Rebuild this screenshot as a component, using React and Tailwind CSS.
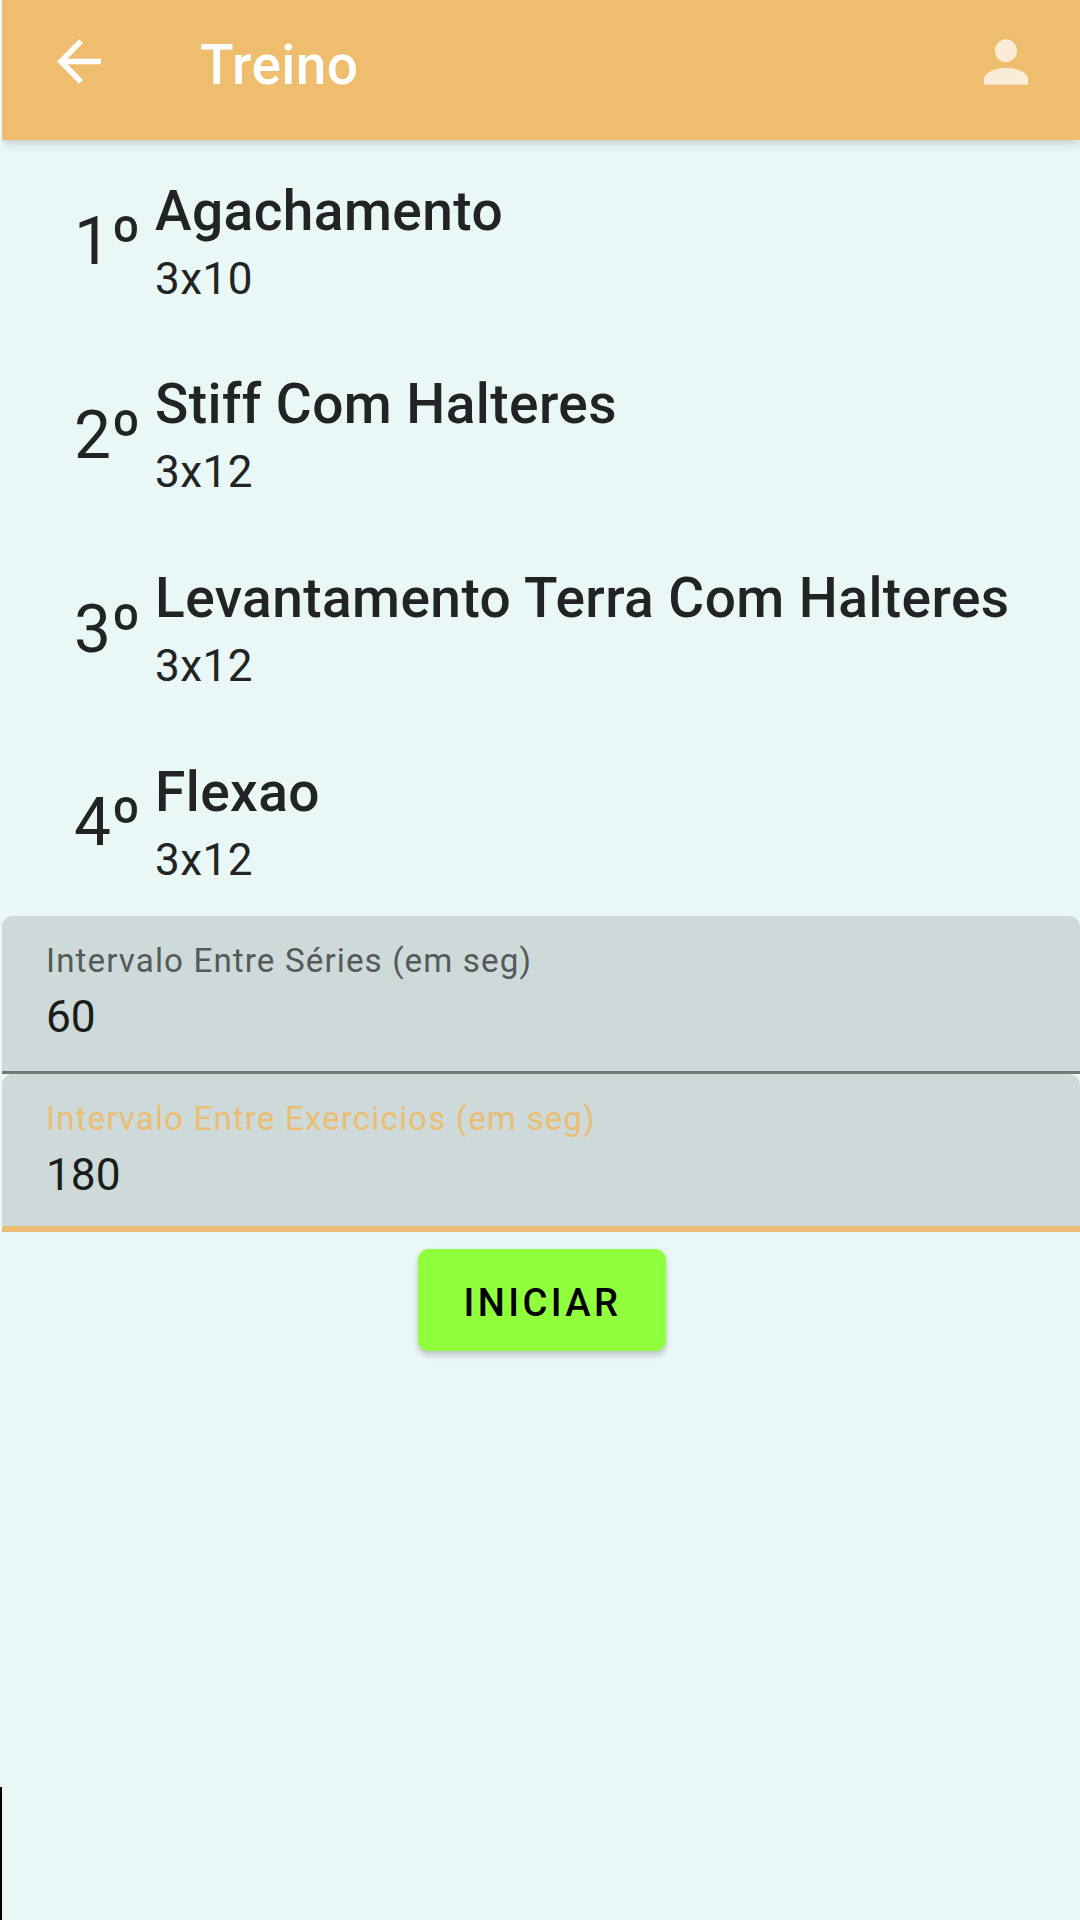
const exercises = [
  { order: '1º', name: 'Agachamento', sets: '3x10' },
  { order: '2º', name: 'Stiff Com Halteres', sets: '3x12' },
  { order: '3º', name: 'Levantamento Terra Com Halteres', sets: '3x12' },
  { order: '4º', name: 'Flexao', sets: '3x12' },
];

function TopBar() {
  return (
    <header className="flex h-[140px] shrink-0 items-start bg-[#efbd6e] pl-[43.5px] pr-[41px] shadow-[0_3px_10px_rgba(0,0,0,0.18)]">
      <button className="mt-[28px]" aria-label="Voltar">
        <svg className="block h-[67px] w-[66px] fill-white" viewBox="0 0 24 24" preserveAspectRatio="none">
          <path d="M20 11H7.83l5.59-5.59L12 4l-8 8 8 8 1.41-1.41L7.83 13H20v-2z" />
        </svg>
      </button>
      <h1 className="ml-[88px] mt-[32px] flex-1 origin-left scale-x-[0.979] text-[56.25px] font-medium leading-[66px] tracking-[0.0075em] text-white">
        Treino
      </h1>
      <button className="mt-[28px]" aria-label="Perfil">
        <svg className="block h-[68px] w-[66px] fill-[#faecd9]" viewBox="0 0 24 24" preserveAspectRatio="none">
          <path d="M12 12c2.21 0 4-1.79 4-4s-1.79-4-4-4-4 1.79-4 4 1.79 4 4 4zm0 2c-2.67 0-8 1.34-8 4v2h16v-2c0-2.66-5.33-4-8-4z" />
        </svg>
      </button>
    </header>
  );
}

function Exercise({ order, name, sets }) {
  return (
    <li className="flex h-[193.75px] pl-[72px] text-[#222423]">
      <span className="mt-[60px] w-[81px] origin-left scale-x-[0.975] text-[67.5px] leading-[80px]">{order}</span>
      <div className="origin-left scale-x-[0.979] pt-[36.5px]">
        <h2 className="whitespace-nowrap text-[56.25px] font-medium leading-[66px] tracking-[0.0075em]">{name}</h2>
        <p className="mt-[8px] text-[45px] leading-[54px] tracking-[0.01em]">{sets}</p>
      </div>
    </li>
  );
}

function Field({ label, value, active }) {
  return (
    <div
      className={
        'flex h-[158px] flex-col rounded-t-[11px] bg-[#cedad9] pl-[44px] pt-[25px] ' +
        (active ? 'border-b-[6px] border-[#e9be74]' : 'border-b-[3px] border-[#727a79]')
      }
    >
      <span
        className={
          'origin-left scale-x-[0.983] text-[33.75px] leading-[40px] tracking-[0.0333em] ' +
          (active ? 'text-[#e9be74]' : 'text-[#545a59]')
        }
      >
        {label}
      </span>
      <span className="mt-[9px] origin-left scale-x-[0.983] text-[45px] leading-[54px] text-[#1a1c1b]">{value}</span>
    </div>
  );
}

export default function App() {
  return (
    <div className="flex h-[1920px] w-[1080px] overflow-hidden bg-[#e9f8f7] font-[Roboto,sans-serif]">
      <div className="flex w-[2px] shrink-0 flex-col justify-end">
        <div className="h-[133px] bg-black" />
      </div>
      <main className="flex w-[1078px] flex-col overflow-hidden">
        <TopBar />
        <ul className="mt-[1px]">
          {exercises.map((e) => (
            <Exercise key={e.order} {...e} />
          ))}
        </ul>
        <Field label="Intervalo Entre Séries (em seg)" value="60" />
        <Field label="Intervalo Entre Exercicios (em seg)" value="180" active />
        <button className="ml-[416px] mt-[17px] h-[102px] w-[248px] rounded-[11px] bg-[#90ff3c] pl-[1px] pt-[5px] text-[39.4px] font-medium tracking-[0.0893em] text-black shadow-[0_4px_6px_rgba(0,0,0,0.22)]">
          <span className="inline-block scale-x-[0.97]">INICIAR</span>
        </button>
      </main>
    </div>
  );
}
